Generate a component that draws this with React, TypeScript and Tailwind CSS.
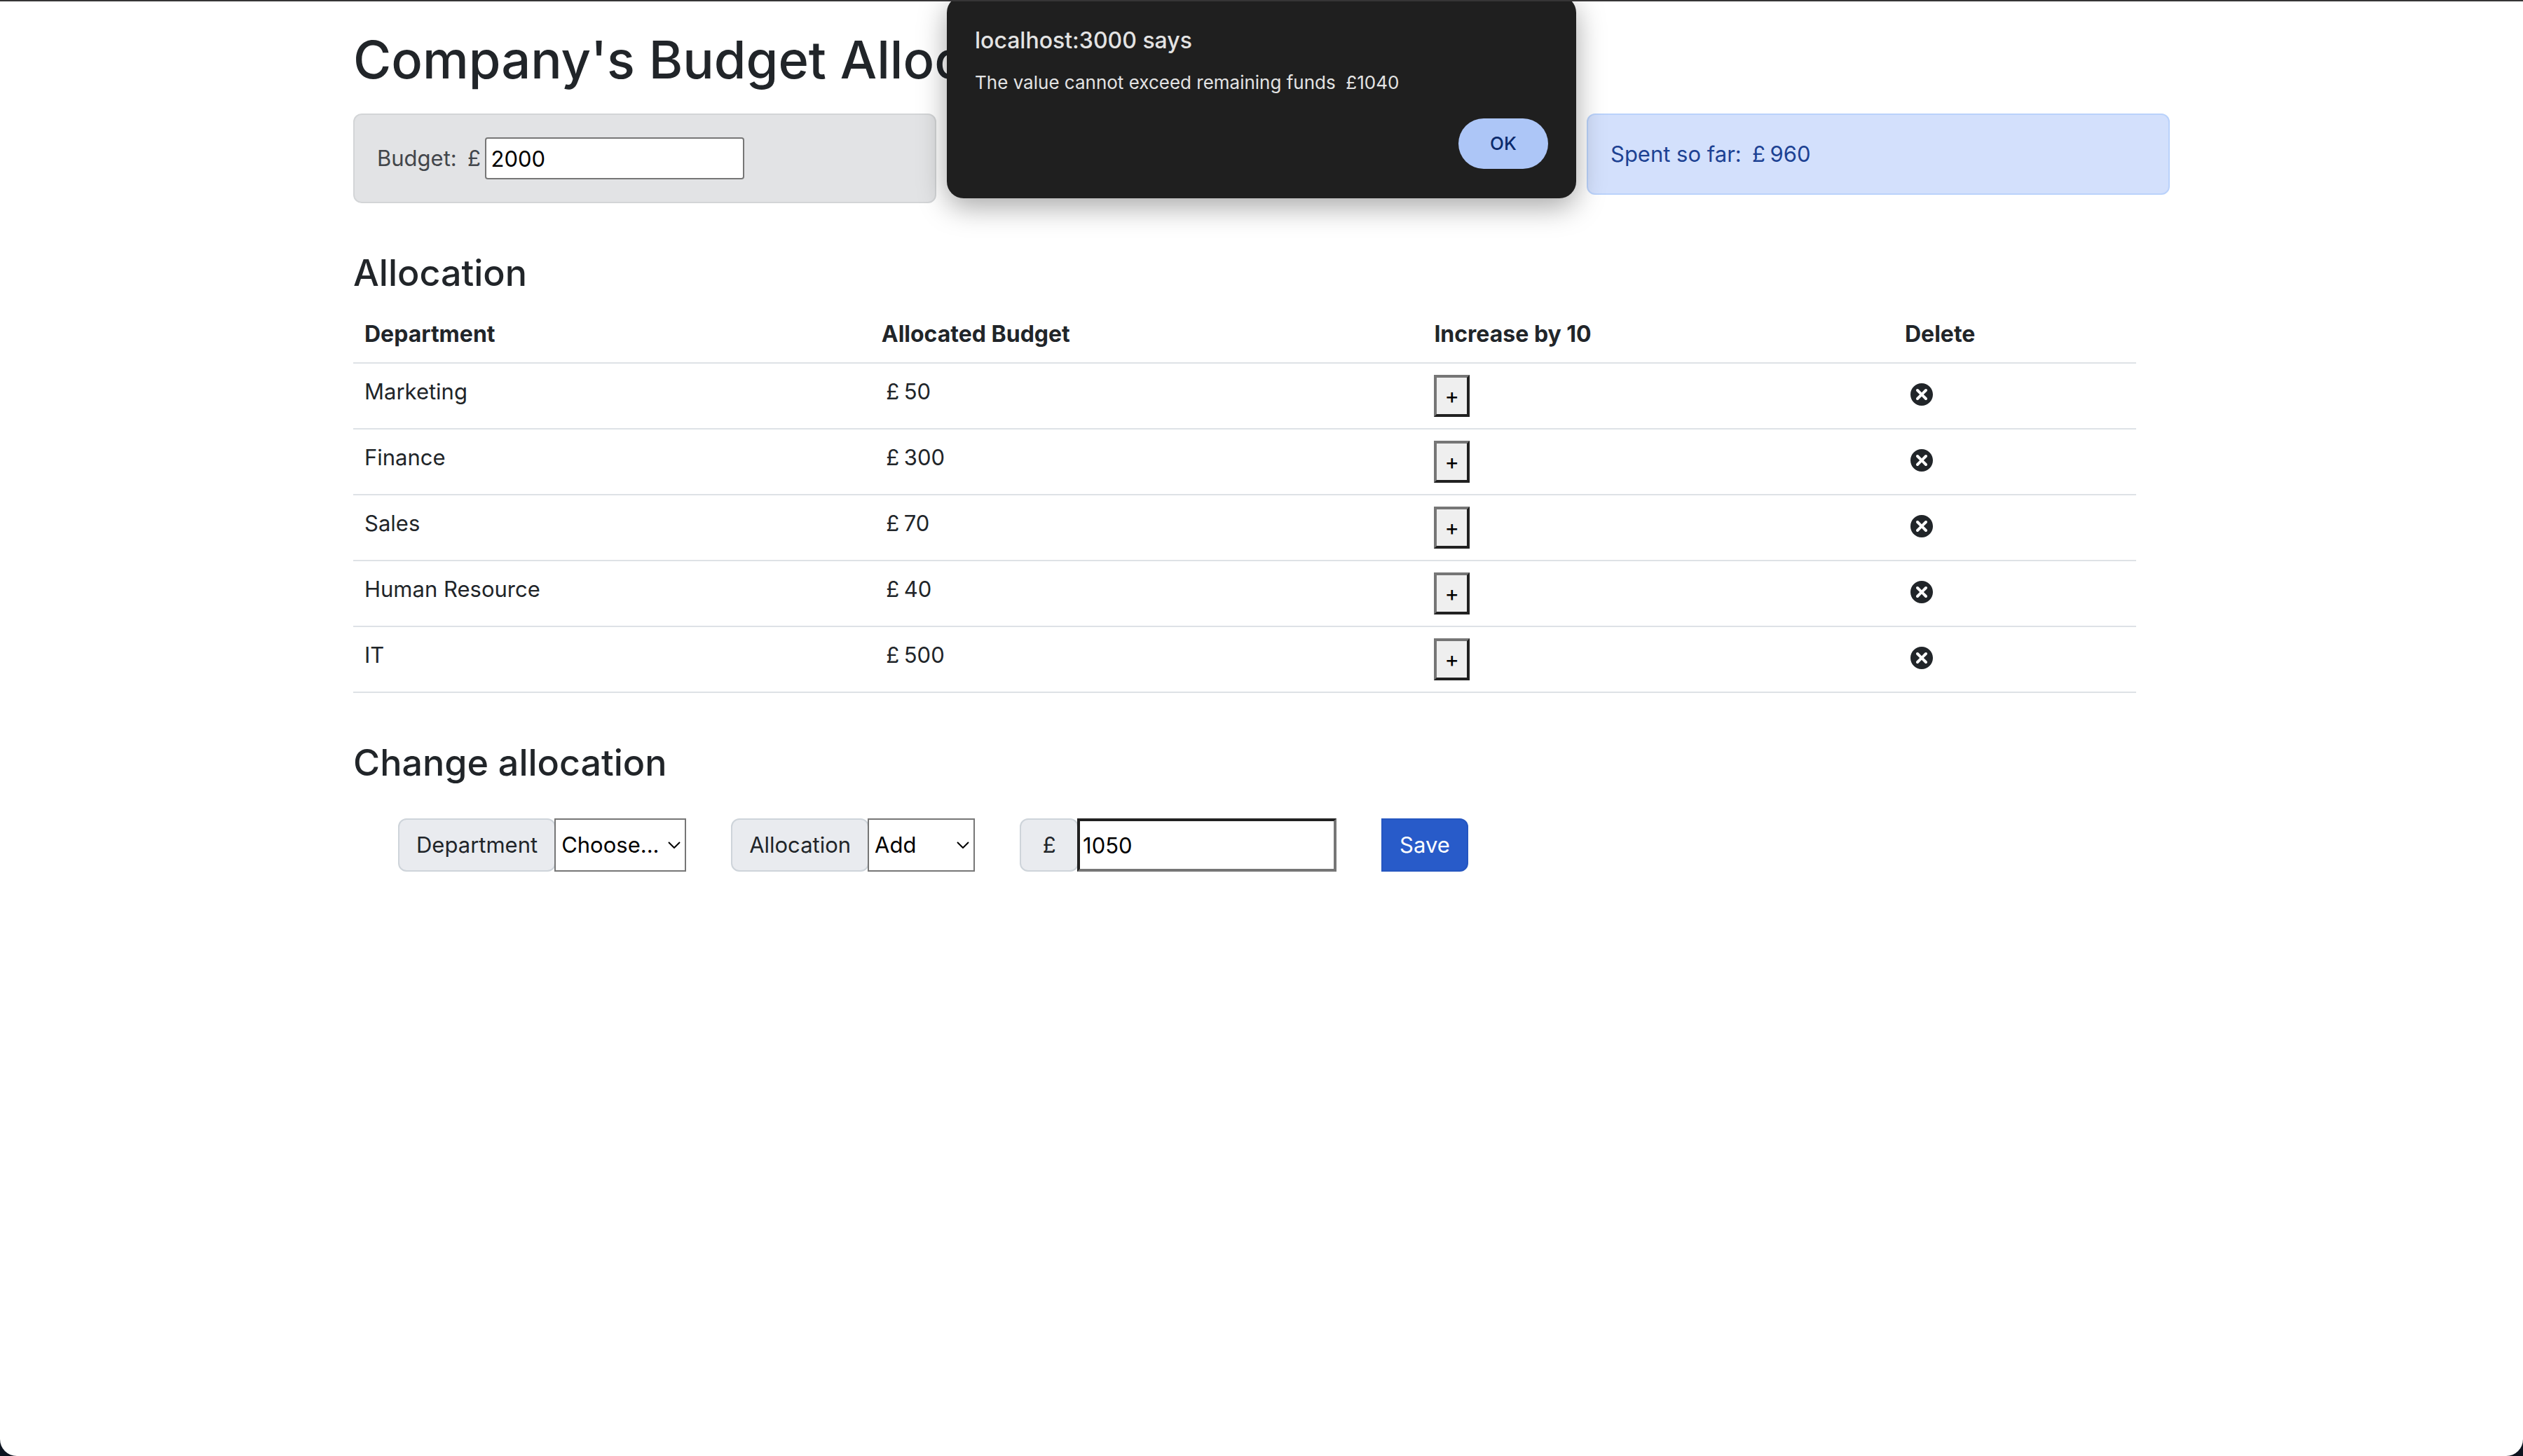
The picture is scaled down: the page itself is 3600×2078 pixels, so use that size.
import { useState } from "react";
import { TiDelete } from "react-icons/ti";

const departments = [
  { name: "Marketing", budget: 50 },
  { name: "Finance", budget: 300 },
  { name: "Sales", budget: 70 },
  { name: "Human Resource", budget: 40 },
  { name: "IT", budget: 500 },
];

function Pound() {
  return <span className="inline-block w-8 text-center">£</span>;
}

function AlertDialog() {
  return (
    <div
      role="alertdialog"
      aria-labelledby="dialog-title"
      aria-describedby="dialog-message"
      className="absolute left-1/2 -top-2 flex w-[898px] -translate-x-1/2 flex-col rounded-3xl bg-[#1f1f1f] px-10 pt-11 pb-[42px] text-[#e3e3e3] shadow-[0_12px_40px_rgba(0,0,0,0.35)]"
    >
      <h2 id="dialog-title" className="text-[32px] leading-10 font-medium">
        localhost:3000 says
      </h2>
      <p id="dialog-message" className="mt-[22px] text-[26px] leading-9 whitespace-pre">
        {"The value cannot exceed remaining funds  £1040"}
      </p>
      <button
        type="button"
        className="mt-[33px] h-[72px] w-32 self-end rounded-full bg-[#adc6f7] text-[26px] font-medium text-[#0b2a6b]"
      >
        OK
      </button>
    </div>
  );
}

function Summary() {
  const [budget, setBudget] = useState("2000");
  return (
    <section className="mt-8 grid grid-cols-3 items-start gap-12">
      <div className="rounded-xl border-2 border-[#d3d5d7] bg-[#e2e3e5] p-8 text-[#42464b]">
        <div className="flex h-[60px] items-center">
          <label htmlFor="budget" className="whitespace-pre">
            {"Budget: "}
            <Pound />
          </label>
          <input
            id="budget"
            value={budget}
            onChange={(e) => setBudget(e.target.value)}
            className="h-[60px] w-[370px] rounded-sm border-2 border-[#767676] bg-white px-1.5 text-black"
          />
        </div>
      </div>
      <div />
      <div className="rounded-xl border-2 border-[#bad2fb] bg-[#d3e0fc] p-8 text-[#1d4293]">
        Spent so far: <Pound />
        960
      </div>
    </section>
  );
}

const headCell = "border-b-2 border-[#dee2e6] p-4 text-[32px] font-bold";
const bodyCell = "border-b-2 border-[#dee2e6] p-4 align-top";

function AllocationTable() {
  return (
    <div className="mt-4 pr-12">
      <table className="w-full table-fixed border-separate border-spacing-0 text-left">
        <colgroup>
          <col className="w-[29%]" />
          <col className="w-[31%]" />
          <col className="w-[26.4%]" />
          <col />
        </colgroup>
        <thead>
          <tr>
            <th className={headCell}>Department</th>
            <th className={headCell}>Allocated Budget</th>
            <th className={headCell}>Increase by 10</th>
            <th className={headCell}>Delete</th>
          </tr>
        </thead>
        <tbody>
          {departments.map((d) => (
            <tr key={d.name}>
              <td className={bodyCell}>{d.name}</td>
              <td className={bodyCell}>
                <Pound />
                {d.budget}
              </td>
              <td className={bodyCell}>
                <button
                  type="button"
                  aria-label={`Increase ${d.name} by 10`}
                  className="block h-[60px] w-[51px] border-4 border-t-[#767676] border-r-[#212121] border-b-[#212121] border-l-[#767676] bg-[#efefef] text-black"
                >
                  +
                </button>
              </td>
              <td className={bodyCell}>
                <button type="button" aria-label={`Delete ${d.name}`} className="mt-1 block">
                  <TiDelete className="size-12" />
                </button>
              </td>
            </tr>
          ))}
        </tbody>
      </table>
    </div>
  );
}

const addon =
  "flex h-[76px] items-center rounded-xl border-2 border-[#ced4da] bg-[#e9ebef] px-6";

type PickerProps = { id: string; label: string; options: string[]; className: string };

function Picker({ id, label, options, className }: PickerProps) {
  return (
    <div className="flex">
      <label htmlFor={id} className={addon}>
        {label}
      </label>
      <div className="relative -ml-0.5">
        <select
          id={id}
          className={`h-[76px] appearance-none border-2 border-[#767676] bg-white pl-2 text-black ${className}`}
        >
          {options.map((o) => (
            <option key={o}>{o}</option>
          ))}
        </select>
        <svg
          viewBox="0 0 18 10"
          className="pointer-events-none absolute top-1/2 right-2 h-2.5 w-[18px] -translate-y-1/2"
          fill="none"
          stroke="#000"
          strokeWidth="2"
        >
          <path d="M1 1l8 8 8-8" />
        </svg>
      </div>
    </div>
  );
}

function AllocationForm() {
  const [cost, setCost] = useState("1050");
  return (
    <form className="mt-12 flex gap-16 pl-16" onSubmit={(e) => e.preventDefault()}>
      <Picker
        id="department"
        label="Department"
        options={["Choose...", ...departments.map((d) => d.name)]}
        className="w-[188px]"
      />
      <Picker id="action" label="Allocation" options={["Add", "Reduce"]} className="w-[153px]" />
      <div className="flex">
        <label htmlFor="cost" className={addon}>
          <Pound />
        </label>
        <input
          id="cost"
          value={cost}
          onChange={(e) => setCost(e.target.value)}
          className="-ml-0.5 h-[76px] w-[370px] border-4 border-t-[#212121] border-r-[#767676] border-b-[#767676] border-l-[#212121] bg-white px-1 text-black outline-none"
        />
      </div>
      <button
        type="submit"
        className="h-[76px] rounded-r-xl border-2 border-[#2556c0] bg-[#285bc9] px-6 text-white"
      >
        Save
      </button>
    </form>
  );
}

export default function App() {
  return (
    <div className="min-h-screen bg-[#0d1420]">
      <div className="relative min-h-screen overflow-hidden rounded-b-3xl border-t-2 border-[#363536] bg-white font-['Inter',sans-serif] text-[31px] leading-[48px] text-[#212529]">
        <main className="mx-auto w-full max-w-[2640px] px-6 pt-8">
          <h1 className="pt-1.5 text-[74px] leading-[90px] font-medium">
            Company&apos;s Budget Allocation
          </h1>
          <Summary />
          <h3 className="mt-16 pt-1 text-[52px] leading-[63px] font-medium">Allocation</h3>
          <AllocationTable />
          <h3 className="mt-16 pt-1 text-[52px] leading-[63px] font-medium">Change allocation</h3>
          <AllocationForm />
        </main>
        <AlertDialog />
      </div>
    </div>
  );
}
